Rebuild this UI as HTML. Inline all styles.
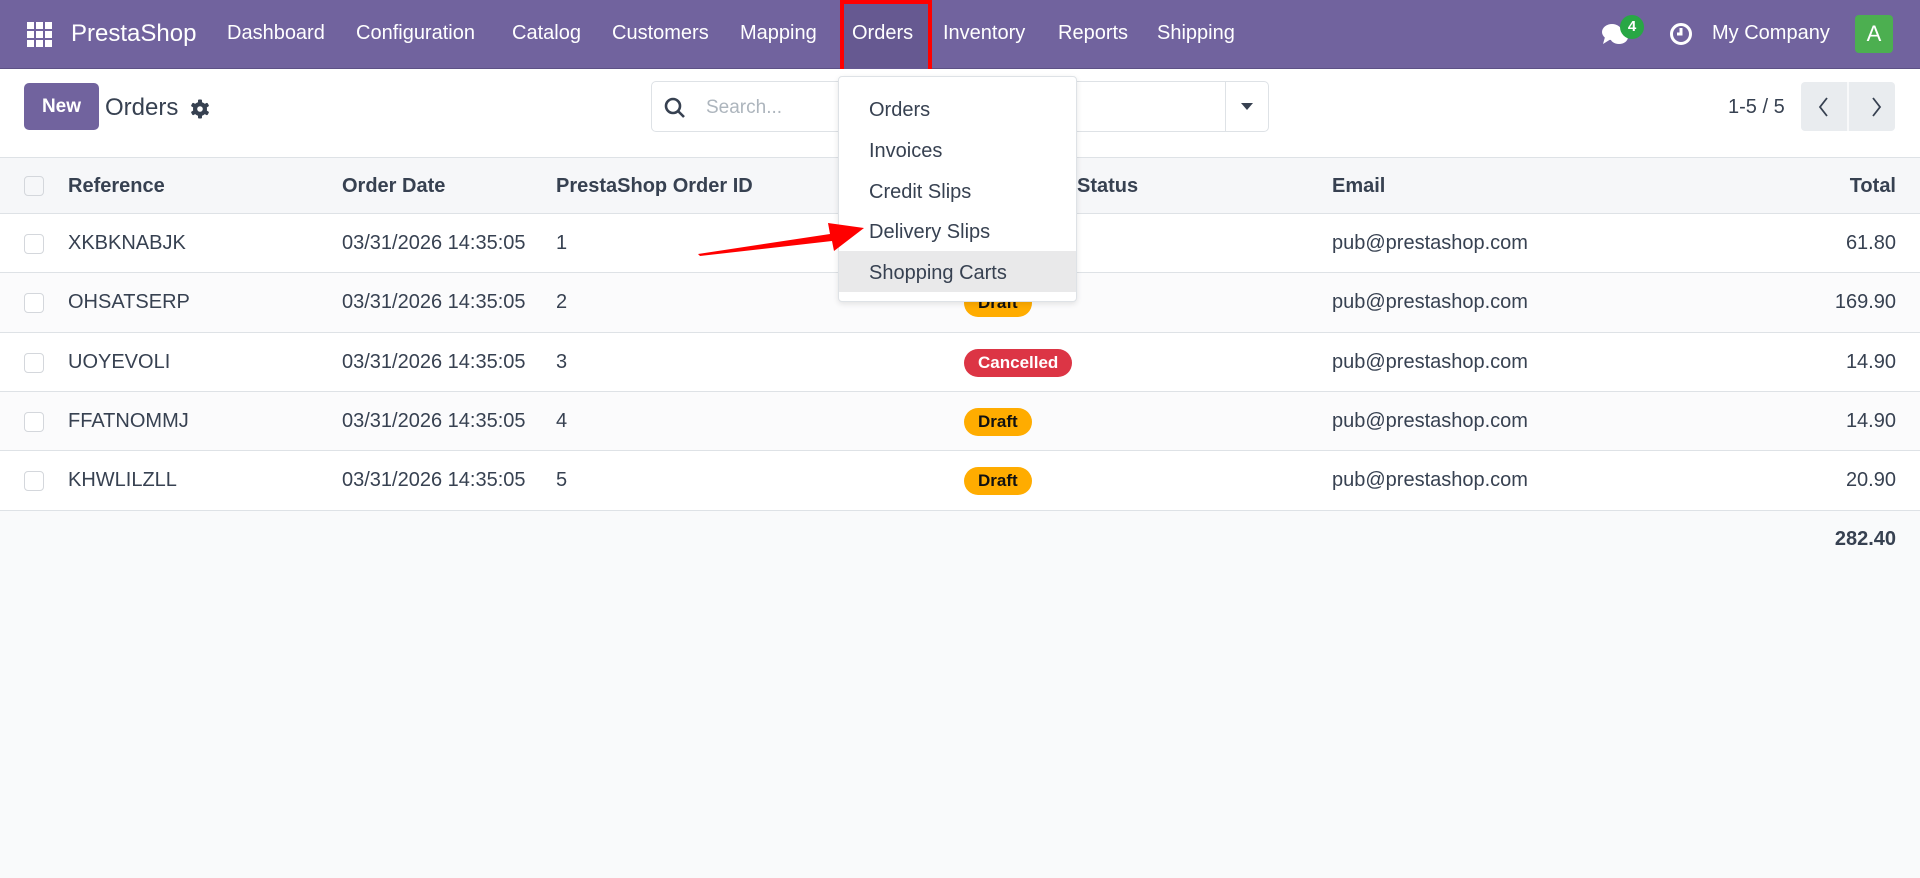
<!DOCTYPE html>
<html><head><meta charset="utf-8"><style>
*{box-sizing:border-box;margin:0;padding:0}
body{width:1920px;height:878px;overflow:hidden;background:#f9fafb;font-family:"Liberation Sans",sans-serif;color:#374151;position:relative}
.nav{position:absolute;left:0;top:0;width:1920px;height:69px;background:#71639e;border-bottom:1px solid #5d5185}
.nav span{position:absolute;top:22px;color:#fff;font-size:20px}
.abs{position:absolute}
.cp{position:absolute;top:69px;left:0;width:1920px;height:89px;background:#fff;border-bottom:1px solid #dee2e6}
.row{position:absolute;left:0;width:1920px;border-bottom:1px solid #dee2e6;font-size:20px}
.row span{position:absolute;top:18px}
.cb{position:absolute;left:24px;top:20px;width:20px;height:20px;border:1px solid #d4d7dc;border-radius:4px;background:#fff}
.badge{position:absolute;top:16px;left:964px;height:28px;border-radius:14px;font-weight:bold;font-size:17px;line-height:28px;padding:0 14px}
.dd span{position:absolute;left:30px;font-size:20px;color:#374151}
</style></head><body>
<div class="nav">
<svg class="abs" style="left:27px;top:22px" width="25" height="25" viewBox="0 0 25 25" fill="#fff"><rect x="0" y="0" width="7" height="7"/><rect x="9" y="0" width="7" height="7"/><rect x="18" y="0" width="7" height="7"/><rect x="0" y="9" width="7" height="7"/><rect x="9" y="9" width="7" height="7"/><rect x="18" y="9" width="7" height="7"/><rect x="0" y="18" width="7" height="7"/><rect x="9" y="18" width="7" height="7"/><rect x="18" y="18" width="7" height="7"/></svg>
<span style="left:71px;top:20px;font-size:24px">PrestaShop</span>
<span style="left:227px">Dashboard</span>
<span style="left:356px">Configuration</span>
<span style="left:512px">Catalog</span>
<span style="left:612px">Customers</span>
<span style="left:740px">Mapping</span>
<div class="abs" style="left:840px;top:0;width:92px;height:73px;background:#665991;border:4px solid #f00"></div>
<span style="left:852px">Orders</span>
<span style="left:943px">Inventory</span>
<span style="left:1058px">Reports</span>
<span style="left:1157px">Shipping</span>
<svg class="abs" style="left:1601px;top:22px" width="30" height="26" viewBox="0 0 30 26" fill="#fff"><ellipse cx="11" cy="10" rx="10" ry="8"/><path d="M4 15 L2 22 L10 17Z"/><ellipse cx="18" cy="15" rx="9" ry="7"/></svg>
<div class="abs" style="left:1620px;top:15px;width:24px;height:24px;border-radius:12px;background:#28a745;color:#fff;font-size:15px;font-weight:bold;text-align:center;line-height:24px">4</div>
<svg class="abs" style="left:1669px;top:22px" width="24" height="24" viewBox="0 0 24 24" fill="none" stroke="#fff" stroke-width="3"><circle cx="12" cy="12" r="9.5"/><path d="M12 6v6h-4"/></svg>
<span style="left:1712px">My Company</span>
<div class="abs" style="left:1855px;top:15px;width:38px;height:38px;background:#4caf50;border-radius:4px;color:#fff;font-size:22px;text-align:center;line-height:38px">A</div>
</div>
<div class="cp">
<div class="abs" style="left:24px;top:14px;width:75px;height:47px;background:#71639e;border-radius:5px;color:#fff;font-weight:bold;font-size:19px;text-align:center;line-height:47px">New</div>
<div class="abs" style="left:105px;top:25px;font-size:24px;color:#374151">Orders</div>
<svg class="abs" style="left:190px;top:30px" width="20" height="20" viewBox="0 0 20 20"><g fill="#374151"><rect x="8" y="0.5" width="4" height="19" rx="1"/><rect x="8" y="0.5" width="4" height="19" rx="1" transform="rotate(60 10 10)"/><rect x="8" y="0.5" width="4" height="19" rx="1" transform="rotate(120 10 10)"/><circle cx="10" cy="10" r="7"/></g><circle cx="10" cy="10" r="2.8" fill="#fff"/></svg>
<div class="abs" style="left:651px;top:12px;width:618px;height:51px;border:1px solid #dee2e6;border-radius:5px;background:#fff"></div>
<div class="abs" style="left:1225px;top:12px;width:1px;height:51px;background:#dee2e6"></div>
<svg class="abs" style="left:664px;top:28px" width="22" height="22" viewBox="0 0 22 22" fill="none" stroke="#374151" stroke-width="2.6"><circle cx="9" cy="9" r="7"/><path d="M14 14l6 6"/></svg>
<div class="abs" style="left:706px;top:28px;font-size:19px;color:#adb5bd">Search...</div>
<svg class="abs" style="left:1241px;top:34px" width="12" height="8"><path d="M0 0h12L6 7z" fill="#374151"/></svg>
<div class="abs" style="left:1728px;top:27px;font-size:20px">1-5 / 5</div>
<div class="abs" style="left:1801px;top:13px;width:94px;height:49px;background:#e9ecef;border-radius:4px"></div>
<div class="abs" style="left:1847px;top:13px;width:2px;height:49px;background:#f8f9fa"></div>
<svg class="abs" style="left:1817px;top:27px" width="70" height="22" fill="none" stroke="#374151" stroke-width="1.8"><path d="M10 2L3 11l7 9"/><path d="M56 2l7 9-7 9"/></svg>
</div>
<div class="row" style="top:158px;height:56px;background:#f6f7f9;font-weight:bold"><div class="cb" style="top:18px;background:#f6f7f9"></div>
<span style="left:68px;top:17px">Reference</span><span style="left:342px;top:17px">Order Date</span><span style="left:556px;top:17px">PrestaShop Order ID</span><span style="left:1077px;top:17px">Status</span><span style="left:1332px;top:17px">Email</span><span style="right:24px;top:17px">Total</span></div>
<div class="row" style="top:214px;height:59px;background:#fff"><div class="cb"></div><span style="left:68px">XKBKNABJK</span><span style="left:342px">03/31/2026 14:35:05</span><span style="left:556px">1</span><div class="badge" style="background:#ffac00;color:#111">Draft</div><span style="left:1332px">pub@prestashop.com</span><span style="right:24px">61.80</span></div>
<div class="row" style="top:273px;height:60px;background:#fbfbfc"><div class="cb"></div><span style="left:68px">OHSATSERP</span><span style="left:342px">03/31/2026 14:35:05</span><span style="left:556px">2</span><div class="badge" style="background:#ffac00;color:#111">Draft</div><span style="left:1332px">pub@prestashop.com</span><span style="right:24px">169.90</span></div>
<div class="row" style="top:333px;height:59px;background:#fff"><div class="cb"></div><span style="left:68px">UOYEVOLI</span><span style="left:342px">03/31/2026 14:35:05</span><span style="left:556px">3</span><div class="badge" style="background:#dc3545;color:#fff">Cancelled</div><span style="left:1332px">pub@prestashop.com</span><span style="right:24px">14.90</span></div>
<div class="row" style="top:392px;height:59px;background:#fbfbfc"><div class="cb"></div><span style="left:68px">FFATNOMMJ</span><span style="left:342px">03/31/2026 14:35:05</span><span style="left:556px">4</span><div class="badge" style="background:#ffac00;color:#111">Draft</div><span style="left:1332px">pub@prestashop.com</span><span style="right:24px">14.90</span></div>
<div class="row" style="top:451px;height:60px;background:#fff"><div class="cb"></div><span style="left:68px">KHWLILZLL</span><span style="left:342px">03/31/2026 14:35:05</span><span style="left:556px">5</span><div class="badge" style="background:#ffac00;color:#111">Draft</div><span style="left:1332px">pub@prestashop.com</span><span style="right:24px">20.90</span></div>
<div class="abs" style="right:24px;top:528px;font-size:20px;font-weight:bold">282.40</div>
<div class="dd abs" style="left:838px;top:76px;width:239px;height:226px;background:#fff;border:1px solid #dee2e6;border-radius:4px;box-shadow:0 2px 6px rgba(0,0,0,.1)">
<div class="abs" style="left:0;top:174px;width:237px;height:41px;background:#e9e9ea"></div>
<span style="top:22px">Orders</span><span style="top:63px">Invoices</span><span style="top:104px">Credit Slips</span><span style="top:144px">Delivery Slips</span><span style="top:185px">Shopping Carts</span>
</div>
<svg class="abs" style="left:690px;top:218px" width="180" height="50"><path d="M8 36 L140 16 L138 5 L174 10 L144 33 L142 23 L10 38Z" fill="#f00"/></svg>
</body></html>
